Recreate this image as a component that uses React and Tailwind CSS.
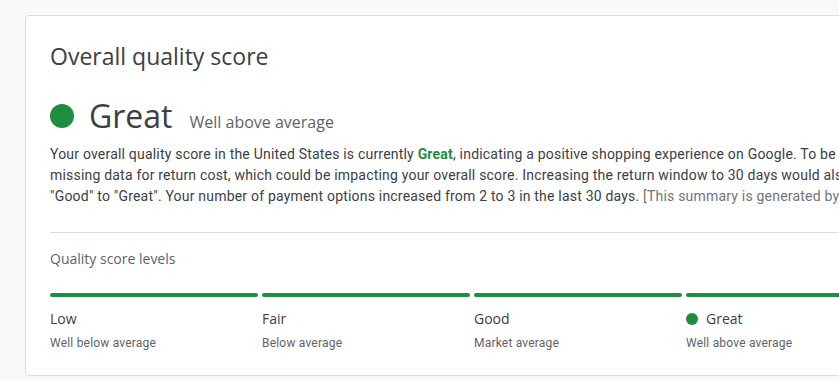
const LEVELS = [
  { name: "Low", desc: "Well below average" },
  { name: "Fair", desc: "Below average" },
  { name: "Good", desc: "Market average" },
  { name: "Great", desc: "Well above average", current: true },
];

const heading = { fontFamily: '"Open Sans", Roboto, sans-serif' };

export default function App() {
  return (
    <div
      className="w-screen h-screen overflow-hidden bg-[#f8f9fa] pt-[15px] pl-[25px]"
      style={{ fontFamily: 'Roboto, "Liberation Sans", sans-serif' }}
    >
      <div className="w-[894px] bg-white border border-[#dadce0] rounded px-6 pt-6 pb-6">
        <h1 className="text-[23px] leading-8 text-[#3c4043]" style={heading}>
          Overall quality score
        </h1>

        <div className="flex items-baseline mt-6 h-10">
          <div className="w-6 h-6 rounded-full bg-[#1e8e3e]" />
          <span className="ml-[15px] text-[32px] leading-10 text-[#3c4043]" style={heading}>
            Great
          </span>
          <span className="ml-[17px] text-base text-[#5f6368]" style={heading}>
            Well above average
          </span>
        </div>

        <div className="mt-2 text-sm leading-[21px] tracking-[0.2px] text-[#3c4043] whitespace-nowrap">
          <div>
            Your overall quality score in the United States is currently{" "}
            <span className="font-bold text-[#1e8e3e]">Great</span>, indicating a positive shopping
            experience on Google. To be
          </div>
          <div>
            missing data for return cost, which could be impacting your overall score. Increasing the
            return window to 30 days would also
          </div>
          <div>
            "Good" to "Great". Your number of payment options increased from 2 to 3 in the last 30
            days. <span className="text-[#70757a]">[This summary is generated by</span>
          </div>
        </div>

        <div className="mt-[25px] border-t border-[#dadce0]" />

        <div className="mt-4 text-sm leading-5 text-[#5f6368]" style={heading}>
          Quality score levels
        </div>

        <div className="mt-6 grid grid-cols-4 gap-1">
          {LEVELS.map((l) => (
            <div key={l.name}>
              <div className="h-1 rounded-full bg-[#1e8e3e]" />
              <div className="mt-3 flex items-center gap-2 text-sm leading-5 text-[#3c4043]" style={heading}>
                {l.current && <span className="w-3 h-3 rounded-full bg-[#1e8e3e]" />}
                {l.name}
              </div>
              <div className="mt-1.5 text-xs leading-4 text-[#5f6368] tracking-[0.2px]">{l.desc}</div>
            </div>
          ))}
        </div>
      </div>
    </div>
  );
}
